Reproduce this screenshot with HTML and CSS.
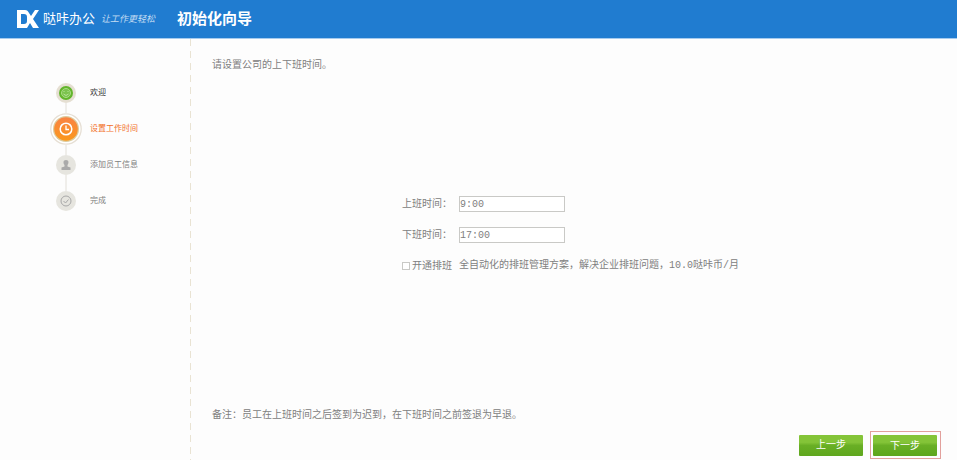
FILE: index.html
```html
<!DOCTYPE html>
<html lang="zh-CN">
<head>
<meta charset="utf-8">
<title>初始化向导</title>
<link rel="stylesheet" href="styles.css">
</head>
<body>
<header class="topbar">
  <svg class="logo" viewBox="0 0 24 18" aria-hidden="true">
    <path fill="#fff" fill-rule="evenodd" d="M1 0h8c2 0 3 1 4 3l2 3 4-6h4l-6 9 6 9h-6l-3-5-3 5H1zM5 4v10h3c2 0 3-1 3-3V7c0-2-1-3-3-3z"/>
  </svg>
  <span class="brand">哒咔办公</span>
  <span class="slogan">让工作更轻松</span>
  <h1 class="title">初始化向导</h1>
</header>
<div class="body">
  <nav class="sidebar">
    <ol class="steps">
      <li class="step done">
        <svg class="dot" viewBox="0 0 32 32" aria-hidden="true">
          <path class="link" d="M16 26v10"/>
          <circle class="ring" cx="16" cy="16" r="10"/>
          <circle cx="16" cy="16" r="7" fill="#62b52b"/>
          <circle cx="16" cy="16" r="4.5" fill="#7cc34e" stroke="#a9dc83"/>
          <path d="M14 14v1M18 14v1M13.5 17q2.5 3 5 0" fill="none" stroke="#b8e39a"/>
        </svg>
        <span>欢迎</span>
      </li>
      <li class="step active">
        <svg class="dot" viewBox="0 0 32 32" aria-hidden="true">
          <defs>
            <linearGradient id="glow" x1="0" y1="0" x2="0" y2="1">
              <stop offset="0" stop-color="#f98343"/>
              <stop offset="1" stop-color="#fb981c"/>
            </linearGradient>
          </defs>
          <circle cx="16" cy="16" r="15.2" fill="#fff" stroke="#e6dfd4" stroke-width="1.3"/>
          <circle cx="16" cy="16" r="13" fill="#dccb9c"/>
          <circle cx="16" cy="16" r="11.8" fill="url(#glow)"/>
          <circle cx="16" cy="16" r="5.8" fill="none" stroke="#fff" stroke-width="1.5"/>
          <path d="M16 12.5v4h3" fill="none" stroke="#fff" stroke-width="1.3"/>
        </svg>
        <span>设置工作时间</span>
      </li>
      <li class="step">
        <svg class="dot" viewBox="0 0 32 32" aria-hidden="true">
          <path class="link" d="M16-4v10M16 26v10"/>
          <circle class="ring" cx="16" cy="16" r="10"/>
          <path fill="#aaa" d="M16 11c3 0 3 3 1.5 5v1.5l3 1V21h-9v-2.500l3-1V16c-1.500-2-1.500-5 1.500-5z"/>
        </svg>
        <span>添加员工信息</span>
      </li>
      <li class="step">
        <svg class="dot" viewBox="0 0 32 32" aria-hidden="true">
          <path class="link" d="M16 0v6"/>
          <circle class="ring" cx="16" cy="16" r="10"/>
          <circle cx="16" cy="16" r="5" fill="none" stroke="#a8a8a8"/>
          <path d="M13.5 16l2 2 3-3.500" fill="none" stroke="#a8a8a8"/>
        </svg>
        <span>完成</span>
      </li>
    </ol>
  </nav>
  <main class="content">
    <p class="text">请设置公司的上下班时间。</p>
    <form class="form" id="hours">
      <label for="start">上班时间：</label>
      <input class="field" id="start" type="text" value="9:00">
      <label for="end">下班时间：</label>
      <input class="field" id="end" type="text" value="17:00">
      <label class="check"><input type="checkbox">开通排班</label>
      <span class="hint">全自动化的排班管理方案，解决企业排班问题，10.0哒咔币/月</span>
    </form>
    <p class="text">备注：员工在上班时间之后签到为迟到，在下班时间之前签退为早退。</p>
    <div class="actions">
      <button class="btn" type="button">上一步</button>
      <span class="highlight"><button class="btn" type="submit" form="hours">下一步</button></span>
    </div>
  </main>
</div>
</body>
</html>
```
FILE: styles.css
```css
* {
  box-sizing: border-box;
}

body {
  display: flex;
  flex-direction: column;
  min-height: 100vh;
  margin: 0;
  background: #fdfdfd;
  color: #808080;
  font: 10px/16px "Liberation Sans", "Noto Sans CJK SC", sans-serif;
}

.topbar {
  display: flex;
  align-items: center;
  height: 39px;
  padding: 0 16px;
  border-bottom: 1px solid #a6cbee;
  background: #207cd0;
  color: #fff;
}

.logo {
  width: 24px;
  height: 18px;
}

.brand {
  margin-left: 3px;
  font-size: 13px;
}

.slogan {
  margin-left: 6px;
  color: #c4dcf3;
  font-size: 9px;
  font-style: italic;
}

.title {
  margin: 0 0 0 22px;
  font-size: 15px;
  font-weight: 700;
}

.body {
  display: flex;
  flex: 1;
}

.sidebar {
  width: 191px;
  padding: 38px 0 0 50px;
  background: repeating-linear-gradient(#e9e3d3 0 7px, transparent 7px 12px) right / 1px 100% no-repeat;
}

.steps {
  display: flex;
  flex-direction: column;
  gap: 4px;
  margin: 0;
  padding: 0;
  list-style: none;
}

.step {
  display: flex;
  align-items: center;
  gap: 8px;
  font-size: 8px;
}

.dot {
  width: 32px;
  height: 32px;
  overflow: visible;
}

.ring {
  fill: #e6e5df;
}

.link {
  stroke: #e2dfd8;
}

.done {
  color: #333;
}

.done .ring {
  fill: #e5dfd2;
}

.active {
  color: #f2702a;
}

.content {
  display: flex;
  flex: 1;
  flex-direction: column;
  padding: 18px 16px 1px 21px;
}

.text {
  margin: 0;
}

.form {
  display: grid;
  grid-template-columns: 57px auto;
  align-content: center;
  justify-content: center;
  row-gap: 15px;
  flex: 1;
  padding: 0 12px 10px 0;
}

.form label {
  white-space: nowrap;
}

.field {
  width: 106px;
  height: 16px;
  padding: 0;
  border: 1px solid #c9c9c6;
  background: #fff;
  color: #808080;
  font: 10px/14px "Liberation Mono", monospace;
}

.check {
  display: flex;
  align-items: center;
  gap: 2px;
}

.check input {
  appearance: none;
  width: 8px;
  height: 8px;
  margin: 0;
  border: 1px solid #c9c9c6;
  background: #fff;
}

.check input:checked {
  background: #6bb12c;
}

.hint {
  font-family: "Liberation Mono", "Noto Sans CJK SC", monospace;
}

.actions {
  display: flex;
  align-items: center;
  justify-content: flex-end;
  gap: 7px;
  margin-top: 8px;
}

.highlight {
  display: flex;
  padding: 3px 3px 2px 2px;
  border: 1px solid #e2a09c;
}

.btn {
  width: 64px;
  height: 21px;
  padding: 0;
  border: 0;
  border-radius: 1px;
  background: linear-gradient(#84c438 0 35%, #69af25 50%, #5ea61d);
  color: #fff;
  font: 10px/20px "Liberation Sans", "Noto Sans CJK SC", sans-serif;
}
```
